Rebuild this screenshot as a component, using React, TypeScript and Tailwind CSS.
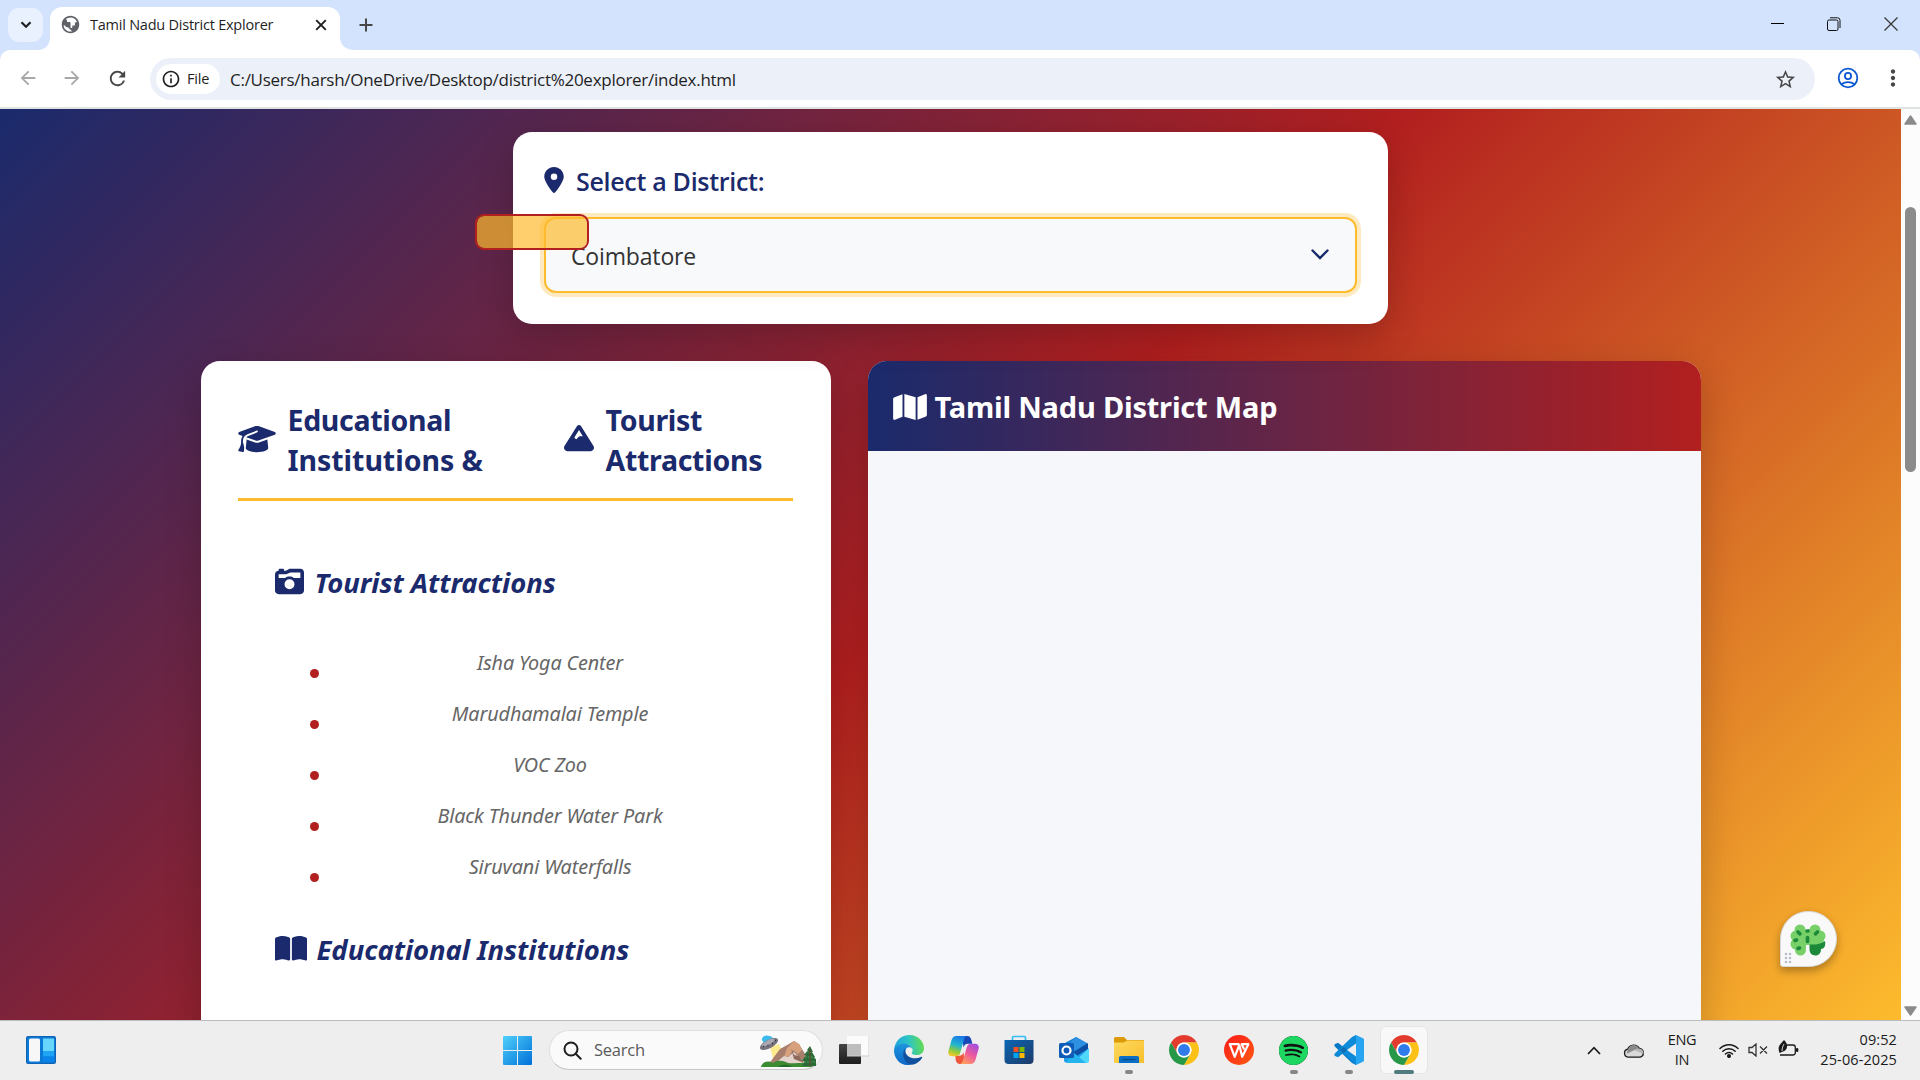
import type { ReactNode } from "react";
import { FaLocationDot, FaGraduationCap, FaMountain, FaCameraRetro, FaBookOpen, FaMap } from "react-icons/fa6";
import { MdPublic, MdArrowBack, MdArrowForward, MdRefresh, MdStarBorder, MdMoreVert, MdOutlineInfo } from "react-icons/md";
import { SiSpotify } from "react-icons/si";

const attractions = [
  "Isha Yoga Center",
  "Marudhamalai Temple",
  "VOC Zoo",
  "Black Thunder Water Park",
  "Siruvani Waterfalls",
];

/* ---------- Browser chrome ---------- */

function TabStrip() {
  return (
    <div className="flex h-[50px] items-start bg-[#d3e3fd]">
      <div className="mt-2 ml-2 flex h-[34px] w-[35px] items-center justify-center rounded-[11px] bg-[#e9f0fe]">
        <svg width="12" height="8" viewBox="0 0 12 8" fill="none" stroke="#1f1f1f" strokeWidth="2.2">
          <path d="M1.5 1.3 6 5.800l4.500-4.500" />
        </svg>
      </div>
      <svg className="mt-[37px] ml-[-5px]" width="12" height="13" viewBox="0 0 12 13">
        <path d="M12 0v13H0C7 13 12 8 12 0Z" fill="#fff" />
      </svg>
      <div className="mt-[7px] flex h-[43px] w-[290px] items-start rounded-t-[12px] bg-white pl-[10px]">
        <MdPublic className="mt-[7px] size-[21px] -scale-x-100 rotate-90 text-[#5f6368]" />
        <span className="mt-[8px] ml-[9px] w-[225px] text-[14.5px] leading-[20px] tracking-[-0.23px] text-[#1f1f1f]">
          Tamil Nadu District Explorer
        </span>
        <svg className="mt-[12px]" width="12" height="12" viewBox="0 0 12 12" stroke="#1f1f1f" strokeWidth="1.9">
          <path d="m1.200 1.200 9.600 9.600M10.800 1.200l-9.600 9.600" />
        </svg>
      </div>
      <svg className="mt-[37px]" width="14" height="13" viewBox="0 0 14 13">
        <path d="M0 0v13h14C6 13 0 8 0 0Z" fill="#fff" />
      </svg>
      <svg className="mt-[18px] ml-[5px]" width="14" height="14" viewBox="0 0 14 14" stroke="#474747" strokeWidth="2">
        <path d="M7 .5v13M.5 7h13" />
      </svg>
      <div className="mt-[17px] ml-auto flex items-center pr-[22px]">
        <svg className="mt-[-1px]" width="13" height="13" viewBox="0 0 13 13" stroke="#000">
          <path d="M0 6.500h13" />
        </svg>
        <svg className="ml-[43px]" width="14" height="14" viewBox="0 0 14 14" fill="none" stroke="#111">
          <rect x=".5" y="3" width="10.5" height="10.5" rx="1.5" />
          <path d="M3 .8h7.500a2.500 2.500 0 0 1 2.500 2.500V11" />
        </svg>
        <svg className="ml-[43px]" width="14" height="14" viewBox="0 0 14 14" stroke="#333" strokeWidth="1.2">
          <path d="m.5.5 13 13M13.500.5l-13 13" />
        </svg>
      </div>
    </div>
  );
}

function Toolbar() {
  return (
    <div className="bg-[#d3e3fd]">
      <div className="flex h-[59px] items-center rounded-t-[10px] border-b-2 border-[#dee2e1] bg-white">
        <MdArrowBack className="mt-[-1px] ml-[17px] size-[22px] text-[#a9a9a9]" />
        <MdArrowForward className="mt-[-1px] ml-[22px] size-[22px] text-[#a9a9a9]" />
        <MdRefresh className="mt-[-1px] ml-[23px] size-[23px] text-[#474747]" />
        <div className="mt-px ml-[21px] flex h-[42px] w-[1665px] items-center rounded-full bg-[#ecf0f9]">
          <div className="ml-[6px] flex h-[30px] w-[64px] items-center rounded-full bg-white pl-[5px]">
            <MdOutlineInfo className="size-[20px] text-[#1f1f1f]" />
            <span className="ml-[6px] text-[14.5px] font-medium tracking-[-0.15px] text-[#1f1f1f]">File</span>
          </div>
          <span className="ml-[10px] pt-px text-[17px] tracking-[-0.27px] text-[#1f1f1f]">
            C:/Users/harsh/OneDrive/Desktop/district%20explorer/index.html
          </span>
          <MdStarBorder className="mr-[18px] ml-auto size-[23px] text-[#474747]" />
        </div>
        <svg className="mt-[-1px] ml-[22px]" width="22" height="22" viewBox="0 0 22 22" fill="none" stroke="#0b57d0" strokeWidth="1.8">
          <circle cx="11" cy="11" r="9.3" />
          <circle cx="11" cy="9" r="3.1" />
          <path d="M4.500 17.300c3.800-3 9.200-3 13 0" />
        </svg>
        <MdMoreVert className="mt-[-1px] ml-[21px] size-[26px] text-[#474747]" />
      </div>
    </div>
  );
}

function Scrollbar() {
  return (
    <div className="flex w-[19px] flex-col items-center bg-[#fcfcfc]">
      <svg className="mt-[6px]" width="13" height="10" viewBox="0 0 13 10">
        <path d="M6.500 1 12 9H1Z" fill="#8b8b8b" stroke="#8b8b8b" strokeWidth="1.5" strokeLinejoin="round" />
      </svg>
      <div className="mt-[82px] h-[265px] w-[11px] rounded-full bg-[#8b8b8b]" />
      <svg className="mt-auto mb-[4px]" width="13" height="10" viewBox="0 0 13 10">
        <path d="M6.500 9 12 1H1Z" fill="#8b8b8b" stroke="#8b8b8b" strokeWidth="1.5" strokeLinejoin="round" />
      </svg>
    </div>
  );
}

/* ---------- Page content ---------- */

function DistrictPicker() {
  return (
    <section className="relative mx-auto mt-[23px] h-[192px] w-[875px] rounded-[19px] bg-white px-[31px] pt-[31px] shadow-[0_12px_37px_rgba(0,0,0,0.2)]">
      <div className="flex h-[36px] items-center text-[#1a2a6c]">
        <FaLocationDot className="mt-[-2px] h-[26px] w-[20px]" />
        <span className="ml-[12px] pt-[2px] text-[25px] font-semibold tracking-[-0.3px]">Select a District:</span>
      </div>
      <div className="mt-[18px] flex h-[76px] items-center rounded-[12px] border-2 border-[#fdbb2d] bg-[#f8f9fb] pr-[26px] pl-[25px] shadow-[0_0_0_4px_rgba(253,187,45,0.3)]">
        <span className="pt-[2px] text-[23px] tracking-[-0.15px] text-[#333]">Coimbatore</span>
        <svg className="mt-[-1px] ml-auto" width="18" height="11" viewBox="0 0 18 11" fill="none" stroke="#1a2a6c" strokeWidth="2.4" strokeLinecap="round">
          <path d="m1.500 1.500 7.500 7.500 7.500-7.500" />
        </svg>
      </div>
      <div className="absolute top-[82px] left-[-38px] h-[36px] w-[114px] rounded-[9px] border-2 border-[#b21f1f] bg-[#fdbb2d]/70 bg-clip-padding" />
    </section>
  );
}

function SectionTitle({ icon, children }: { icon: ReactNode; children: ReactNode }) {
  return (
    <h3 className="flex h-[42px] items-center font-['Noto_Sans',sans-serif] text-[27.5px] font-bold tracking-[-0.06px] text-[#1a2a6c] italic">
      {icon}
      {children}
    </h3>
  );
}

function DetailsCard() {
  return (
    <section className="h-[720px] w-[630px] rounded-t-[19px] bg-white pr-[38px] pl-[37px] pt-[39px] shadow-[0_12px_37px_rgba(0,0,0,0.2)]">
      <h2 className="flex h-[101px] border-b-3 border-[#fdbb2d] font-['Noto_Sans',sans-serif] text-[28.5px] leading-[40px] font-bold tracking-[-0.3px] text-[#1a2a6c]">
        <FaGraduationCap className="mt-[24px] h-[30px] w-[38px]" />
        <span className="ml-[12px] w-[275px]">
          Educational
          <br />
          <span className="tracking-[-0.05px]">Institutions &amp;</span>
        </span>
        <FaMountain className="mt-[23px] ml-px size-[30px]" />
        <span className="ml-[12px]">
          Tourist
          <br />
          Attractions
        </span>
      </h2>
      <div className="pr-[36px] pl-[37px] pt-[61px]">
        <SectionTitle icon={<FaCameraRetro className="mt-[-4px] mr-[11px] size-[29px]" />}>Tourist Attractions</SectionTitle>
        <ul className="mt-[33px]">
          {attractions.map((name) => (
            <li key={name} className="flex h-[51px] items-start">
              <span className="mt-[32px] ml-[35px] size-[9px] rounded-full bg-[#b21f1f]" />
              <span className="mr-[-1px] ml-[24px] flex-1 pt-[13px] text-center font-['Noto_Sans',sans-serif] text-[19.8px] leading-[26px] tracking-[-0.12px] text-[#666] italic">
                {name}
              </span>
            </li>
          ))}
        </ul>
        <div className="mt-[37px]">
          <SectionTitle icon={<FaBookOpen className="mt-[-4px] mr-[10px] h-[29px] w-[32px]" />}>Educational Institutions</SectionTitle>
        </div>
      </div>
    </section>
  );
}

function MapCard() {
  return (
    <section className="h-[720px] w-[833px] overflow-hidden rounded-t-[19px] bg-[#f5f7fb] shadow-[0_12px_37px_rgba(0,0,0,0.2)]">
      <h2 className="flex h-[90px] items-center bg-linear-[90deg,#1a2a6c,#b21f1f] pl-[25px] font-['Noto_Sans',sans-serif] text-[29px] font-bold tracking-[-0.2px] text-white">
        <FaMap className="mt-px h-[30px] w-[34px]" />
        <span className="ml-[8px] pt-px">Tamil Nadu District Map</span>
      </h2>
    </section>
  );
}

function AssistantBubble() {
  return (
    <div className="absolute top-[802px] left-[1780px] h-[56px] w-[57px] rounded-[28px] rounded-bl-[3px] border border-[#d9d9d9] bg-[#f9f9f9] shadow-[0_4px_9px_rgba(0,0,0,0.3)]">
      <svg width="55" height="54" viewBox="0 0 55 54">
        <g fill="#77d068">
          <circle cx="19" cy="18" r="5.5" />
          <circle cx="15" cy="24" r="5.5" />
          <circle cx="15" cy="32" r="5.5" />
          <circle cx="19.500" cy="38" r="5.5" />
          <path d="M18 13.500h4l3 5v18l-5 2Z" />
          <circle cx="34" cy="18" r="5.5" />
          <circle cx="39" cy="24" r="5.5" />
          <path d="M27 17h10l6 12-3 4H28Z" />
          <rect x="23" y="19" width="7" height="14" />
        </g>
        <path d="M28.500 32.500c6 .5 11-.5 15.500-3.500 1 5-1 8-4 8 0 4-2 6.500-5.500 6.500-4 0-6-3-6-6Z" fill="#1c8a39" />
        <g stroke="#1c8a39" strokeWidth="3.600" strokeLinecap="round">
          <path d="m17 20 2 1.800M14 28.500l1.500-.5M17 36.500l1.500-.5M36.500 20l-2 1.800M26.500 25.500v4M26 19h1" />
        </g>
        <g fill="#b9bccb">
          <circle cx="5" cy="42" r="1.300" />
          <circle cx="9" cy="42" r="1.300" />
          <circle cx="5" cy="46" r="1.300" />
          <circle cx="9" cy="46" r="1.300" />
          <circle cx="5" cy="50" r="1.300" />
          <circle cx="9" cy="50" r="1.300" />
        </g>
      </svg>
    </div>
  );
}

/* ---------- Taskbar icons ---------- */

function WidgetsIcon() {
  return (
    <svg width="30" height="28" viewBox="0 0 30 28">
      <rect width="30" height="28" rx="2" fill="#0f62b4" />
      <rect x="1" y="1" width="28" height="26" rx="1.500" fill="#0b7ad6" />
      <rect x="3" y="2.500" width="11" height="23" rx="1.500" fill="#f7f7f7" />
      <rect x="17" y="2.500" width="11" height="12.500" fill="#66d6ff" />
      <rect x="17" y="15" width="11" height="5.500" fill="#1ea3f5" />
      <rect x="17" y="20.500" width="11" height="5" fill="#0a84ea" />
    </svg>
  );
}

function StartIcon() {
  return (
    <svg width="29" height="29" viewBox="0 0 29 29">
      <defs>
        <linearGradient id="win" x1="0" y1="0" x2="1" y2="1">
          <stop offset="0" stopColor="#4fd0fb" />
          <stop offset="1" stopColor="#0070d8" />
        </linearGradient>
      </defs>
      <path d="M1 0h13v14H0V1a1 1 0 0 1 1-1ZM15 0h13a1 1 0 0 1 1 1v13H15ZM0 15h14v14H1a1 1 0 0 1-1-1ZM15 15h14v13a1 1 0 0 1-1 1H15Z" fill="url(#win)" />
    </svg>
  );
}

function SearchArt() {
  return (
    <svg width="58" height="33" viewBox="0 0 58 33">
      <path d="M10 12 19 9l7 16-12 2Z" fill="#ffe46b" opacity=".75" />
      <path d="M8 30 20 14l9-5 5-3 5 3 3 5 8 13 2 3Z" fill="#a87f6c" />
      <path d="m34 6 5 3 3 6-4 4-5-4-4 6-5 1 3-9Z" fill="#d7a17e" />
      <path d="m18 26 6-5 4 1 6-5 5 5 6 6-8 2H16Z" fill="#e3d3cc" />
      <path d="m31 13 3 7 5 1 5 7-10-4Z" fill="#8e6a5a" />
      <path d="M1 32c1-5 7-7 12-4 5-4 12-2 15 0 8 1 18-1 26 1l-2 3Z" fill="#3c8a34" />
      <path d="M18 32c4-3 11-3 14 0Z" fill="#256b26" />
      <path d="m50 11-3 4h1l-4 5h2l-4 6h3l-3 5h14v-7l-2-1 1-1-3-5h1Z" fill="#2c6b39" />
      <path d="M47 17h6M45 22h10M44 27h12" stroke="#4b9a51" strokeWidth="1" strokeDasharray="2 1" />
      <path d="M50 14v17" stroke="#6a4a35" strokeWidth="1.200" />
      <path d="M3 7c-1-4 5-8 9-5l3 4-8 5Z" fill="#3bbcec" />
      <ellipse cx="9" cy="9" rx="10" ry="4.300" transform="rotate(-28 9 9)" fill="#77747f" />
      <ellipse cx="8.300" cy="7.500" rx="7" ry="2.300" transform="rotate(-28 8.300 7.500)" fill="#aaa8b3" />
      <path d="M2 5.500c-1-4 4.500-6.500 8-4l.5 1.500-6 3.500Z" fill="#3bbcec" />
      <path d="M3 11.500h1M7.500 10.500h1M12 8.500h1M15 5.500h1" stroke="#34323b" strokeWidth="1.500" />
    </svg>
  );
}

function TaskViewIcon() {
  return (
    <svg width="30" height="30" viewBox="0 0 30 30">
      <defs>
        <linearGradient id="tv" x1="0" y1="0" x2="0" y2="1">
          <stop offset="0" stopColor="#444" />
          <stop offset="1" stopColor="#1d1d1d" />
        </linearGradient>
      </defs>
      <rect x="0" y="9" width="22" height="20" rx="1" fill="url(#tv)" />
      <rect x="8" y="1" width="22" height="20" rx="1" fill="#fff" opacity=".75" />
      <path d="M8 9h14v12H8Z" fill="#bdbdbd" />
      <path d="M30 1v20H8" fill="none" stroke="#ccc" />
    </svg>
  );
}

function EdgeIcon() {
  return (
    <svg width="30" height="30" viewBox="0 0 48 48">
      <defs>
        <linearGradient id="eg1" x1="0" y1=".5" x2="1" y2=".4">
          <stop offset="0" stopColor="#22a0e0" />
          <stop offset=".5" stopColor="#2cc5c5" />
          <stop offset="1" stopColor="#66dc4b" />
        </linearGradient>
        <linearGradient id="eg2" x1="0" y1="0" x2="0" y2="1">
          <stop offset="0" stopColor="#1c96dd" />
          <stop offset="1" stopColor="#0c66c8" />
        </linearGradient>
      </defs>
      <path d="M0 25C1 9 12 0 25 0c14 0 23 11 23 21 0 7-5 11-12 11-5 0-8.500-2-7.500-4 2-2 1.500-5 .5-7-3-5-7-6-11-6C9 15 2 20 0 25Z" fill="url(#eg1)" />
      <path d="M0 25c1-7 8-11 16-11 7 0 12 4 13.500 9C26 18 18 21 18 28c0 9 9 14 16 13-3 5-8 7-13 7C9 48 0 36 0 25Z" fill="url(#eg2)" />
      <path d="M17.500 22C11 30 16 46 28 47.500c8-.5 14-5.500 17-11 .5-1.500-1-2-2.500-1C32 40 17 36 17.500 22Z" fill="#10519f" />
      <ellipse cx="24" cy="25" rx="5" ry="5.500" fill="#eee" />
    </svg>
  );
}

function CopilotIcon() {
  return (
    <svg width="31" height="28" viewBox="0 0 48 44">
      <defs>
        <linearGradient id="cp1" x1=".6" y1="0" x2=".3" y2="1">
          <stop offset="0" stopColor="#1a78e8" />
          <stop offset=".45" stopColor="#22b5d0" />
          <stop offset=".75" stopColor="#8ecb3c" />
          <stop offset="1" stopColor="#f7c92b" />
        </linearGradient>
        <linearGradient id="cp2" x1=".8" y1="0" x2=".2" y2="1">
          <stop offset="0" stopColor="#a24de0" />
          <stop offset=".5" stopColor="#ee5a9c" />
          <stop offset="1" stopColor="#ffa45a" />
        </linearGradient>
      </defs>
      <path d="M22 0h8c3 0 5 2 6 5l2 7h-7c-4 0-6 2-7 6Z" fill="#1648b8" />
      <path d="M26 44h-8c-3 0-5-2-6-5l-1-8h6c4 0 6-2 7-6Z" fill="#f0563c" />
      <path d="M13 0h17c-3 0-4 2-5 5l-6 21c-1 4-3 6-7 6H6c-5 0-7-4-5.500-9L5 7c1.500-5 4-7 8-7Z" fill="url(#cp1)" />
      <path d="M35 44H18c3 0 4-2 5-5l6-21c1-4 3-6 7-6h6c5 0 7 4 5.500 9L43 37c-1.500 5-4 7-8 7Z" fill="url(#cp2)" />
    </svg>
  );
}

function StoreIcon() {
  return (
    <svg width="30" height="30" viewBox="0 0 30 30">
      <defs>
        <linearGradient id="st" x1="0" y1="0" x2="1" y2="1">
          <stop offset="0" stopColor="#0a66b4" />
          <stop offset="1" stopColor="#1e3a68" />
        </linearGradient>
      </defs>
      <path d="M8.500 6V2.500a1 1 0 0 1 1-1h11a1 1 0 0 1 1 1V6" fill="none" stroke="#36bdf3" strokeWidth="1.700" />
      <path d="M.5 5h29v20a4 4 0 0 1-4 4h-21a4 4 0 0 1-4-4Z" fill="url(#st)" />
      <path d="M9.500 12h5v5h-5Z" fill="#f25022" />
      <path d="M15.500 12h5v5h-5Z" fill="#7fba00" />
      <path d="M9.500 18h5v5h-5Z" fill="#00a4ef" />
      <path d="M15.500 18h5v5h-5Z" fill="#ffb900" />
    </svg>
  );
}

function OutlookIcon() {
  return (
    <svg width="30" height="28" viewBox="0 0 30 28">
      <path d="M4 8 17 1l12 7v5H4Z" fill="#1583d5" />
      <path d="M8 8h21v16a2.500 2.500 0 0 1-2.500 2.500h-19A2.500 2.500 0 0 1 5 24V9Z" fill="#1b9de8" />
      <path d="m14 16 15-9v6L16 21Z" fill="#0f4fa3" />
      <path d="m17 1 11 6-14 9-6-6Z" fill="#2f8fe0" />
      <path d="M30 12v12.500a2.500 2.500 0 0 1-2.500 2.500H14Z" fill="#4fd8fa" />
      <path d="M14 16 7 27h20Z" fill="#25b3ee" />
      <rect y="7" width="15" height="15" rx="1.500" fill="#0f5cb8" />
      <circle cx="7.500" cy="14.500" r="4" fill="none" stroke="#fff" strokeWidth="2.200" />
    </svg>
  );
}

function FolderIcon() {
  return (
    <svg width="30" height="30" viewBox="0 0 30 30">
      <defs>
        <linearGradient id="fo" x1="0" y1="0" x2="1" y2="1">
          <stop offset="0" stopColor="#ffd95e" />
          <stop offset="1" stopColor="#f8bf2c" />
        </linearGradient>
      </defs>
      <path d="M0 3.500A1.500 1.500 0 0 1 1.500 2H10l3 3h17v8H0Z" fill="#dd9a08" />
      <path d="M0 7.500h10l3-2h17V28H1a1 1 0 0 1-1-1Z" fill="url(#fo)" />
      <path d="M5 28v-5.500A1.500 1.500 0 0 1 6.500 21h17a1.500 1.500 0 0 1 1.500 1.500V28Z" fill="#0c6fc4" />
      <path d="M8.500 24.500h13" stroke="#084a86" strokeWidth="1.200" />
    </svg>
  );
}

function ChromeIcon() {
  return (
    <svg width="30" height="30" viewBox="2 2 44 44">
      <path d="M24 13h19.050A22 22 0 0 0 4.950 13l9.520 16.500A11 11 0 0 1 24 13Z" fill="#e33b2e" />
      <path d="M33.530 29.500 24 46a22 22 0 0 0 19.050-33H24a11 11 0 0 1 9.530 16.500Z" fill="#fbc116" />
      <path d="M14.470 29.500 4.950 13A22 22 0 0 0 24 46l9.530-16.500a11 11 0 0 1-19.060 0Z" fill="#279847" />
      <circle cx="24" cy="24" r="11" fill="#fff" />
      <circle cx="24" cy="24" r="8.700" fill="#2f7bea" />
    </svg>
  );
}

function WpsIcon() {
  return (
    <svg width="30" height="30" viewBox="0 0 30 30">
      <defs>
        <linearGradient id="wps" x1="0" y1="0" x2="1" y2="1">
          <stop offset="0" stopColor="#fb1a1a" />
          <stop offset="1" stopColor="#ff5a10" />
        </linearGradient>
      </defs>
      <circle cx="15" cy="15" r="15" fill="url(#wps)" />
      <path d="M14.500 9.200H5.800l4.900 12.600 4.600-11.800 2.900 11.800 6.200-12.600h-6.600l2 4.500" fill="none" stroke="#fff" strokeWidth="2.200" strokeLinejoin="round" strokeLinecap="round" />
    </svg>
  );
}

function SpotifyIcon() {
  return (
    <span className="flex size-[29px] items-center justify-center rounded-full bg-[#111]">
      <SiSpotify className="size-[29px] text-[#1ed760]" />
    </span>
  );
}

function VsCodeIcon() {
  return (
    <svg width="30" height="30" viewBox="0 0 30 30">
      <path d="M22 0 9.500 12 4 7.700.5 9.200v2L18 28l4 2 1-9Z" fill="#0879c6" />
      <path d="M22 30 9.500 18 4 22.300.5 20.800v-2L18 2l4-2 1 9Z" fill="#0d8bd9" />
      <path d="M9.500 12 6 15l3.500 3 3.500-3Z" fill="#0a6db5" />
      <path d="m22 8.500-9 6.500 9 6.500Z" fill="#eee" />
      <path d="M22 0 29 3.300a1.500 1.500 0 0 1 1 1.400v20.600a1.500 1.500 0 0 1-1 1.400L22 30Z" fill="#27a5f3" />
    </svg>
  );
}

type TaskbarApp = { name: string; icon: ReactNode; open?: boolean; active?: boolean };

const apps: TaskbarApp[] = [
  { name: "taskview", icon: <TaskViewIcon /> },
  { name: "edge", icon: <EdgeIcon /> },
  { name: "copilot", icon: <CopilotIcon /> },
  { name: "store", icon: <StoreIcon /> },
  { name: "outlook", icon: <OutlookIcon /> },
  { name: "files", icon: <FolderIcon />, open: true },
  { name: "chrome", icon: <ChromeIcon /> },
  { name: "wps", icon: <WpsIcon /> },
  { name: "spotify", icon: <SpotifyIcon />, open: true },
  { name: "vscode", icon: <VsCodeIcon />, open: true },
  { name: "chrome-active", icon: <ChromeIcon />, active: true },
];

function Taskbar() {
  return (
    <footer className="flex h-[60px] items-center border-t border-[#bcbcc0] bg-[#eee] pb-px">
      <div className="ml-[26px] w-[477px]">
        <WidgetsIcon />
      </div>
      <StartIcon />
      <div className="ml-[17px] flex h-[40px] w-[274px] items-center rounded-full border border-b-[#c8c8c8] border-[#dfdfdf] bg-[#fafafa]">
        <svg className="ml-[13px]" width="19" height="19" viewBox="0 0 19 19" fill="none" stroke="#1f1f1f" strokeWidth="2" strokeLinecap="round">
          <circle cx="8" cy="8" r="6.500" />
          <path d="m12.700 12.700 5 5" />
        </svg>
        <span className="ml-[12px] pt-px text-[16.5px] tracking-[-0.25px] text-[#5a5a5a]">Search</span>
        <div className="mr-[4px] ml-auto pt-[3px]">
          <SearchArt />
        </div>
      </div>
      <div className="ml-[3px] flex">
        {apps.map((app) => (
          <div key={app.name} className="flex w-[55px] justify-center">
            <div
              className={
                app.active
                  ? "relative flex size-[48px] items-center justify-center rounded-[6px] border border-[#e6e6e6] bg-[#f8f8f8]"
                  : "relative flex size-[48px] items-center justify-center"
              }
            >
              {app.icon}
              {app.open && <span className="absolute bottom-0 left-[20px] h-[4px] w-[8px] rounded-full bg-[#868686]" />}
              {app.active && <span className="absolute bottom-[-1px] left-[13px] h-[4px] w-[20px] rounded-full bg-[#527b80]" />}
            </div>
          </div>
        ))}
      </div>
      <div className="ml-auto flex items-center pr-[23px] text-[14.5px] leading-[20px] text-[#1a1a1a]">
        <svg width="14" height="9" viewBox="0 0 14 9" fill="none" stroke="#1a1a1a" strokeWidth="1.700">
          <path d="m1 8 6-6.300L13 8" />
        </svg>
        <svg className="ml-[22px]" width="22" height="15" viewBox="0 0 20 14">
          <path d="M4.500 13.200a3.800 3.800 0 0 1-.3-7.500A6 6 0 0 1 15 5a4.200 4.200 0 0 1 .7 8.200Z" fill="#d9d9d9" stroke="#1a1a1a" strokeWidth="1.200" />
          <path d="M4.500 5.500C6 1 13 .5 14.500 5l-4 1.500L3 10Z" fill="#8a8a8a" />
          <path d="M10 6.500 19 10c0-3-2-4.500-4-4.800Z" fill="#b5b5b5" />
        </svg>
        <div className="ml-[20px] w-[34px] text-center text-[14.5px] tracking-[-0.3px]">
          <div>ENG</div>
          <div>IN</div>
        </div>
        <svg className="ml-[20px]" width="20" height="15" viewBox="0 0 20 15" fill="none" stroke="#1a1a1a" strokeWidth="1.500" strokeLinecap="round">
          <path d="M1 5.500c5-5 13-5 18 0M3.800 8.300c3.400-3.400 9-3.400 12.400 0M6.500 11c2-2 5-2 7 0" />
          <circle cx="10" cy="13" r="1.300" fill="#1a1a1a" />
        </svg>
        <svg className="ml-[9px]" width="20" height="14" viewBox="0 0 20 14" fill="none" stroke="#333" strokeWidth="1.300">
          <path d="M1 4.500h3L8 1v12L4 9.500H1ZM12 3.500l7 7M19 3.500l-7 7" />
        </svg>
        <svg className="mt-[-3px] ml-[10px]" width="21" height="17" viewBox="0 0 21 17">
          <path d="M8 5h7a2.300 2.300 0 0 1 2.300 2.300v5.400A2.300 2.300 0 0 1 15 15H2" fill="none" stroke="#1a1a1a" strokeWidth="1.300" />
          <rect x="18" y="8" width="2.300" height="4" rx="1" fill="#1a1a1a" />
          <path d="M6 0c2 2 3.500 4 3 7-.3 2.500-2 4-4 4.500L1.500 13C0 9 .5 6 2.500 4Z" fill="#1a1a1a" />
          <path d="M4 11c0-3 1-5 2-7" stroke="#eee" fill="none" strokeWidth=".9" />
        </svg>
        <div className="ml-[16px] w-[82px] text-right tracking-[0.1px]">
          <div>09:52</div>
          <div>25-06-2025</div>
        </div>
      </div>
    </footer>
  );
}

export default function App() {
  return (
    <div className="flex h-[1080px] w-[1920px] flex-col overflow-hidden font-['Open_Sans','Noto_Sans',sans-serif]">
      <TabStrip />
      <Toolbar />
      <div className="flex h-[911px] overflow-hidden">
        <main className="relative h-[911px] w-[1901px] overflow-hidden bg-linear-[135deg,#1a2a6c,#b21f1f,#fdbb2d]">
          <DistrictPicker />
          <div className="mx-auto mt-[37px] flex w-[1500px] justify-between">
            <DetailsCard />
            <MapCard />
          </div>
          <AssistantBubble />
        </main>
        <Scrollbar />
      </div>
      <Taskbar />
    </div>
  );
}
